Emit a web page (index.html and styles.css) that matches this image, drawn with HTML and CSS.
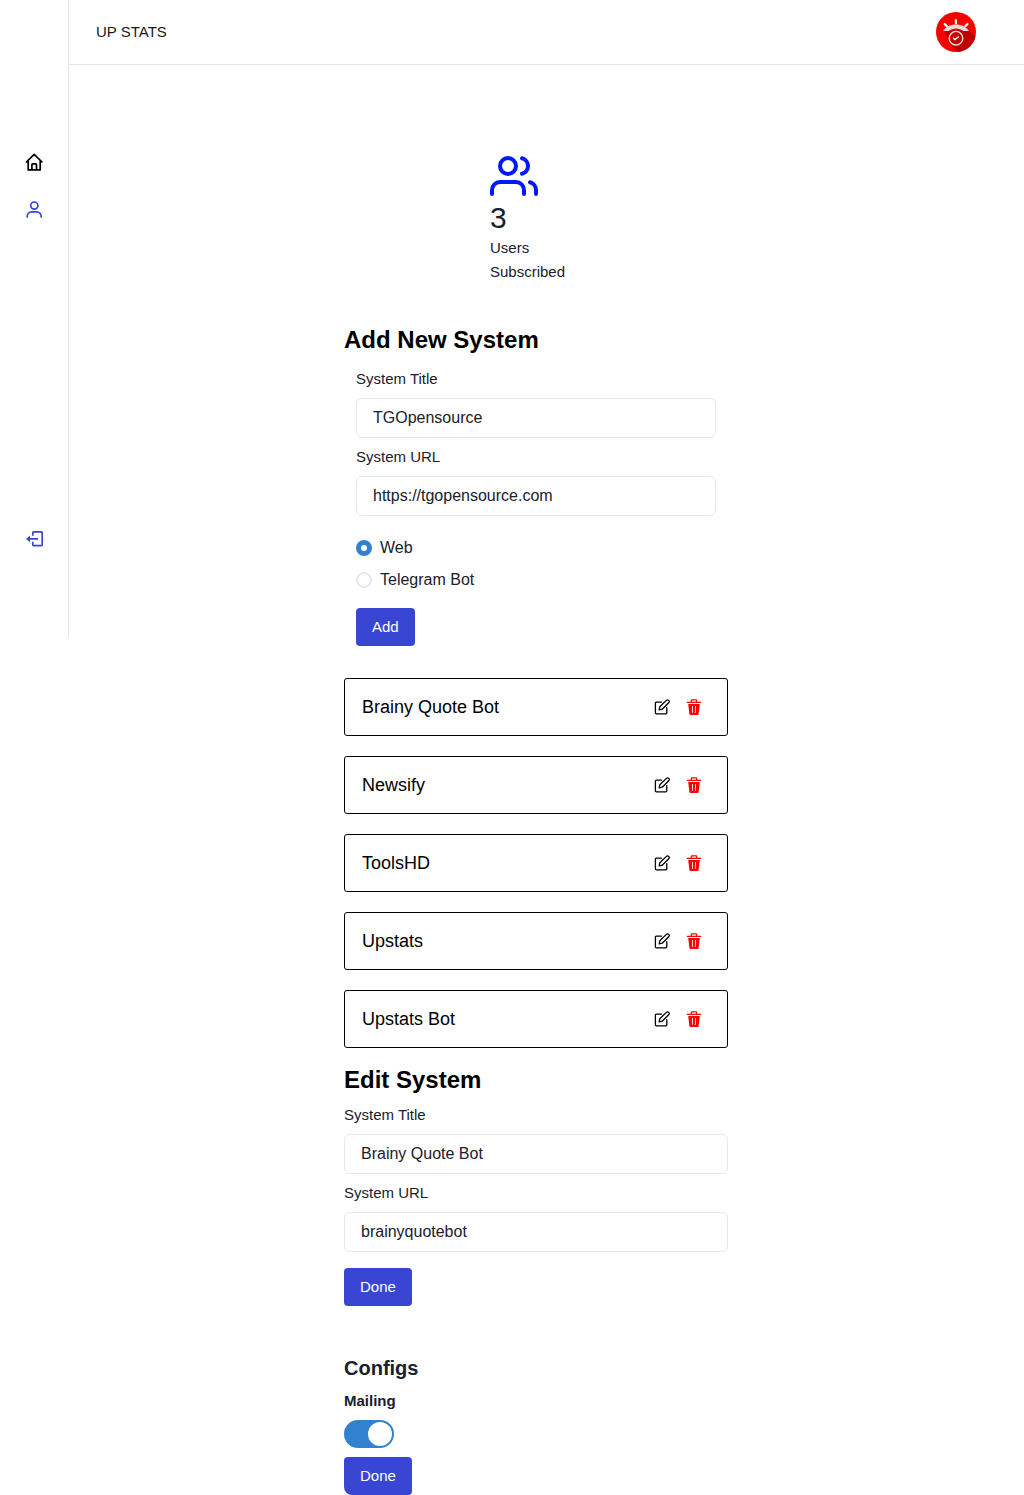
FILE: index.html
```html
<!DOCTYPE html>
<html lang="en">
<head>
<meta charset="utf-8">
<title>UP STATS</title>
<link rel="stylesheet" href="styles.css">
</head>
<body>
<svg class="defs" width="0" height="0">
  <symbol id="edit" viewBox="0 0 16 16"><path d="M7.500 3.100H2.400a1 1 0 0 0-1 1v9.700a1 1 0 0 0 1 1h9.400a1 1 0 0 0 1-1V8.600M12.400 1.400a1.600 1.600 0 0 1 2.300 2.300L8.200 10.200l-3 .6.600-3z" fill="none" stroke="#000" stroke-width="1.300" stroke-linejoin="round" stroke-linecap="round"/></symbol>
  <symbol id="trash" viewBox="0 0 16 18"><path d="M.9 4.400h14.200M5.300 4V2.500a.6.600 0 0 1 .6-.6h4.200a.6.600 0 0 1 .6.600V4" fill="none" stroke="#f00" stroke-width="1.200"/><path fill="#f00" fill-rule="evenodd" d="M2.200 6h11.600l-1.200 10a1.200 1.200 0 0 1-1.200 1H4.600a1.200 1.200 0 0 1-1.200-1zM6 8l.3 7h.8l-.2-7zM9.100 8l-.2 7h.8l.3-7z"/></symbol>
</svg>
<div class="app">
  <aside class="sidebar">
    <svg class="home" width="20" height="20" viewBox="0 0 20 20" fill="none" stroke="#000" stroke-width="1.700" stroke-linejoin="round" stroke-linecap="round"><path d="M2.400 10l7.800-7.600L18 10M4.200 8.600V17.900h12V8.600M7.900 17.700v-5.100a.8.800 0 0 1 .8-.8h3a.8.800 0 0 1 .8.800v5.100"/></svg>
    <svg class="person" width="20" height="20" viewBox="0 0 20 20" fill="none" stroke="#3946d3" stroke-width="1.700" stroke-linecap="round"><circle cx="10.300" cy="5.600" r="3.600"/><path d="M3.200 17v-.8a4.500 4.500 0 0 1 4.500-4.400h5a4.500 4.500 0 0 1 4.500 4.400v.8"/></svg>
    <svg class="logout" width="20" height="20" viewBox="0 0 20 20" fill="none" stroke="#3946d3" stroke-width="1.700"><path d="M8.800 6.800V3.700a.9.900 0 0 1 .9-.9h7.600a.9.900 0 0 1 .9.900v12a.9.900 0 0 1-.9.900H9.700a.9.900 0 0 1-.9-.9v-3M14 9.900H4"/><path d="M6 6.600L2 9.900l4 3.300z" fill="#3946d3" stroke="none"/></svg>
  </aside>
  <div class="page">
    <header class="header">
      <span>UP STATS</span>
      <svg width="40" height="40" viewBox="0 0 40 40">
        <defs><clipPath id="round"><circle cx="20" cy="20" r="20"/></clipPath></defs>
        <g clip-path="url(#round)"><path fill="#f90000" d="M0 0h40v40H0z"/><path fill="#c00000" d="M32 17l10 10v15H24l-9-9-7-14z"/></g>
        <path d="M7 18.900C12.500 10.300 27.500 10.300 33 18.900l-5.600.2c-4.200-3.400-10.600-3.400-14.800 0z" fill="#dedede"/>
        <path d="M8.700 12l2 2M19.900 8.200v3M31.500 12l-2 2" stroke="#fff" stroke-width="2.300" stroke-linecap="round"/>
        <circle cx="20" cy="26.200" r="6.800" fill="#c80000" stroke="#f4dada" stroke-width="1.400"/>
        <path d="M17.200 26.200l1.700 1.300 3.900-3" fill="none" stroke="#fff" stroke-width="1.500"/>
      </svg>
    </header>
    <main class="content">
      <section class="stats">
        <svg width="48" height="48" viewBox="0 0 24 24" fill="none" stroke="#0018ff" stroke-width="2" stroke-linecap="round" stroke-linejoin="round"><path d="M17 21v-2a4 4 0 0 0-4-4H5a4 4 0 0 0-4 4v2M23 21v-2a4 4 0 0 0-3-3.870M16 3.130a4 4 0 0 1 0 7.750"/><circle cx="9" cy="7" r="4"/></svg>
        <div class="count">3</div>
        <div>Users</div>
        <div>Subscribed</div>
      </section>
      <h2>Add New System</h2>
      <form class="fields inset">
        <label for="title">System Title</label>
        <input id="title" type="text" value="TGOpensource">
        <label for="url">System URL</label>
        <input id="url" type="text" value="https://tgopensource.com">
        <div class="radios">
          <div class="option"><span class="radio checked"></span>Web</div>
          <div class="option"><span class="radio"></span>Telegram Bot</div>
        </div>
        <button type="button">Add</button>
      </form>
      <section class="systems">
        <div class="card"><span>Brainy Quote Bot</span><svg width="16" height="16"><use href="#edit"/></svg><svg width="16" height="18"><use href="#trash"/></svg></div>
        <div class="card"><span>Newsify</span><svg width="16" height="16"><use href="#edit"/></svg><svg width="16" height="18"><use href="#trash"/></svg></div>
        <div class="card"><span>ToolsHD</span><svg width="16" height="16"><use href="#edit"/></svg><svg width="16" height="18"><use href="#trash"/></svg></div>
        <div class="card"><span>Upstats</span><svg width="16" height="16"><use href="#edit"/></svg><svg width="16" height="18"><use href="#trash"/></svg></div>
        <div class="card"><span>Upstats Bot</span><svg width="16" height="16"><use href="#edit"/></svg><svg width="16" height="18"><use href="#trash"/></svg></div>
      </section>
      <h2>Edit System</h2>
      <form class="fields edit-form">
        <label for="edit-title">System Title</label>
        <input id="edit-title" type="text" value="Brainy Quote Bot">
        <label for="edit-url">System URL</label>
        <input id="edit-url" type="text" value="brainyquotebot">
        <button type="button">Done</button>
      </form>
      <section class="configs">
        <h3>Configs</h3>
        <strong>Mailing</strong>
        <div class="switch"><span></span></div>
        <button type="button">Done</button>
      </section>
    </main>
  </div>
</div>
</body>
</html>
```
FILE: styles.css
```css
* { box-sizing: border-box; }
body {
  margin: 0;
  background: #fff;
  color: #1a202c;
  font: 15px/24px "Liberation Sans", Arial, sans-serif;
}
svg { display: block; flex: none; }
.defs { position: absolute; }
.app { display: flex; align-items: flex-start; }
.sidebar {
  width: 69px;
  height: 637px;
  flex: none;
  display: flex;
  flex-direction: column;
  align-items: center;
  padding-top: 152px;
  border-right: 1px solid #e2e4ea;
}
.person { margin-top: 28px; }
.logout { margin-top: 309px; }
.page { flex: 1; }
.header {
  height: 65px;
  display: flex;
  align-items: center;
  justify-content: space-between;
  padding: 0 48px 0 27px;
  border-bottom: 1px solid #e2e4ea;
  color: #1a1a1a;
}
.content { width: 384px; margin-left: 275px; padding-top: 87px; }
.stats { margin-left: 146px; height: 172px; }
.count { font-size: 30px; line-height: 36px; }
h2, h3 { margin: 0; font-weight: 700; }
h2 { font-size: 24px; line-height: 32px; color: #000; }
h3 { font-size: 20px; line-height: 28px; }
.fields { display: flex; flex-direction: column; align-items: flex-start; padding-top: 7px; }
.inset { padding: 11px 12px 0; }
label { margin-bottom: 7px; }
input {
  width: 100%;
  height: 40px;
  margin: 0 0 7px;
  padding: 0 16px;
  border: 1px solid #e2e8f0;
  border-radius: 6px;
  background: #fff;
  color: #1a202c;
  font: 16px "Liberation Sans", Arial, sans-serif;
}
.radios { display: grid; gap: 8px; margin: 13px 0 16px; font-size: 16px; }
.option { display: flex; align-items: center; gap: 8px; }
.radio { width: 16px; height: 16px; border: 2px solid #e2e8f0; border-radius: 50%; }
.checked { border: 5px solid #3182ce; }
button {
  display: block;
  height: 38px;
  padding: 0 16px;
  border: 0;
  border-radius: 4px;
  background: #3946d3;
  color: #fff;
  font: 15px/24px "Liberation Sans", Arial, sans-serif;
}
.systems { display: grid; gap: 20px; margin: 32px 0 16px; }
.card {
  height: 58px;
  display: flex;
  align-items: center;
  gap: 16px;
  padding: 0 25px 0 17px;
  border: 1px solid #000;
  border-radius: 3px;
  color: #000;
  font-size: 18px;
}
.card span { flex: 1; }
.edit-form button { margin-top: 9px; }
.configs { margin-top: 48px; }
.configs strong { display: block; margin: 7px 0; }
.switch {
  width: 50px;
  height: 28px;
  display: flex;
  justify-content: flex-end;
  padding: 2px;
  margin-bottom: 9px;
  border-radius: 14px;
  background: #3182ce;
}
.switch span { width: 24px; height: 24px; border-radius: 50%; background: #fff; }
.configs button { border-bottom-left-radius: 8px; }
```
